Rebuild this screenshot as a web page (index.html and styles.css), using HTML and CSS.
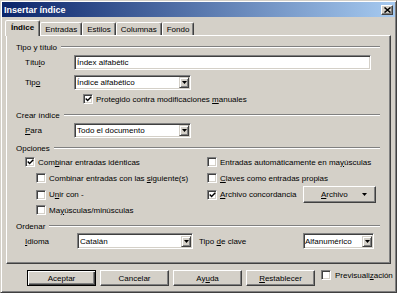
FILE: index.html
```html
<!DOCTYPE html>
<html lang="es">
<head>
    <meta charset="UTF-8">
    <title>Insertar índice</title>
    <link rel="stylesheet" href="styles.css">
</head>
<body>
    <div class="dialog">
        <div class="titlebar">
            <span class="title">Insertar índice</span>
            <span class="close">
                <svg width="7" height="6" viewBox="0 0 7 6"><path d="M0.5 0.5 L6.5 5.5 M6.5 0.5 L0.5 5.5" stroke="#000" stroke-width="1.5"/></svg>
            </span>
        </div>

        <div class="tabs">
            <div class="tab active">Índice</div>
            <div class="tab">Entradas</div>
            <div class="tab">Estilos</div>
            <div class="tab">Columnas</div>
            <div class="tab">Fondo</div>
        </div>

        <div class="panel">
            <div class="group-title first"><span>Tipo y título</span></div>
            <div class="field gap-3">
                <span class="label">Títu<u>l</u>o</span>
                <div class="input wide">Índex alfabètic</div>
            </div>
            <div class="field gap-5">
                <span class="label">Tip<u>o</u></span>
                <div class="select">
                    <span class="value">Índice alfabético</span>
                    <span class="arrow"><svg width="5" height="3" viewBox="0 0 5 3"><path d="M0 0 H5 L2.5 3 Z" fill="#000"/></svg></span>
                </div>
            </div>
            <div class="check-row protect">
                <span class="check on"><svg width="7" height="6" viewBox="0 0 7 6"><path d="M0.7 2.6 L2.6 4.6 L6.3 0.8" fill="none" stroke="#000" stroke-width="1.4"/></svg></span>
                <span>Protegido contra modificaciones <u>m</u>anuales</span>
            </div>

            <div class="group-title gap-6"><span>Crear índice</span></div>
            <div class="field gap-3">
                <span class="label"><u>P</u>ara</span>
                <div class="select">
                    <span class="value">Todo el documento</span>
                    <span class="arrow"><svg width="5" height="3" viewBox="0 0 5 3"><path d="M0 0 H5 L2.5 3 Z" fill="#000"/></svg></span>
                </div>
            </div>

            <div class="group-title gap-5"><span>Opciones</span></div>
            <div class="options">
                <div class="check-row">
                    <span class="check on"><svg width="7" height="6" viewBox="0 0 7 6"><path d="M0.7 2.6 L2.6 4.6 L6.3 0.8" fill="none" stroke="#000" stroke-width="1.4"/></svg></span>
                    <span>Com<u>b</u>inar entradas idénticas</span>
                </div>
                <div class="check-row">
                    <span class="check"></span>
                    <span>Entradas automáticamente en ma<u>y</u>úsculas</span>
                </div>
                <div class="check-row sub">
                    <span class="check"></span>
                    <span>Combinar entradas con las <u>s</u>iguiente(s)</span>
                </div>
                <div class="check-row">
                    <span class="check"></span>
                    <span><u>C</u>laves como entradas propias</span>
                </div>
                <div class="check-row sub">
                    <span class="check"></span>
                    <span>U<u>n</u>ir con -</span>
                </div>
                <div class="check-row">
                    <span class="check on"><svg width="7" height="6" viewBox="0 0 7 6"><path d="M0.7 2.6 L2.6 4.6 L6.3 0.8" fill="none" stroke="#000" stroke-width="1.4"/></svg></span>
                    <span><u>A</u>rchivo concordancia</span>
                    <span class="btn menu-btn">
                        <span><u>A</u>rchivo</span>
                        <svg width="5" height="3" viewBox="0 0 5 3"><path d="M0 0 H5 L2.5 3 Z" fill="#000"/></svg>
                    </span>
                </div>
                <div class="check-row sub">
                    <span class="check"></span>
                    <span>Ma<u>y</u>úsculas/minúsculas</span>
                </div>
                <div></div>
            </div>

            <div class="group-title gap-4"><span>Ordenar</span></div>
            <div class="field sort gap-2">
                <span class="label lang"><u>I</u>dioma</span>
                <div class="select lang-select">
                    <span class="value">Catalán</span>
                    <span class="arrow"><svg width="5" height="3" viewBox="0 0 5 3"><path d="M0 0 H5 L2.5 3 Z" fill="#000"/></svg></span>
                </div>
                <span class="label key">Tipo <u>d</u>e clave</span>
                <div class="select key-select">
                    <span class="value">Alfanumérico</span>
                    <span class="arrow"><svg width="5" height="3" viewBox="0 0 5 3"><path d="M0 0 H5 L2.5 3 Z" fill="#000"/></svg></span>
                </div>
            </div>
        </div>

        <div class="buttons">
            <span class="btn default">Aceptar</span>
            <span class="btn">Cancelar</span>
            <span class="btn">Ay<u>u</u>da</span>
            <span class="btn"><u>R</u>establecer</span>
            <div class="check-row preview">
                <span class="check"></span>
                <span>Previsuali<u>z</u>ación</span>
            </div>
        </div>
    </div>
</body>
</html>
```

FILE: styles.css
```css
* {
    margin: 0;
    padding: 0;
    box-sizing: border-box;
}

body {
    width: 397px;
    height: 293px;
    overflow: hidden;
    background: #d4d0c8;
    font-family: "Liberation Sans", Arial, sans-serif;
    font-size: 8px;
    color: #000;
}

u {
    text-decoration-thickness: 1px;
}

.dialog {
    width: 397px;
    height: 293px;
    padding: 1px;
    border: 1px solid;
    border-color: #d4d0c8 #404040 #404040 #d4d0c8;
    box-shadow: inset 1px 1px #fff, inset -1px -1px #808080;
}

/* Title bar */
.titlebar {
    height: 15px;
    display: flex;
    align-items: center;
    justify-content: space-between;
    padding: 0 2px 0 2px;
    background: linear-gradient(to right, #0a246a, #a6caf0);
}

.title {
    color: #fff;
    font-size: 9px;
    font-weight: bold;
}

.close {
    width: 12px;
    height: 10px;
    display: flex;
    align-items: center;
    justify-content: center;
    background: #d4d0c8;
    border: 1px solid;
    border-color: #fff #404040 #404040 #fff;
    box-shadow: inset -1px -1px #808080;
}

/* Tabs */
.tabs {
    height: 18px;
    display: flex;
    align-items: flex-end;
    padding-left: 3px;
}

.tab {
    height: 13px;
    padding: 0 4px;
    display: flex;
    align-items: center;
    background: #d4d0c8;
    border: 1px solid;
    border-bottom: none;
    border-color: #fff #404040 transparent #fff;
    border-radius: 2px 2px 0 0;
    box-shadow: inset -1px 0 #808080;
}

.tab.active {
    height: 16px;
    margin-bottom: -1px;
    padding: 0 5px 2px 5px;
    font-weight: bold;
    position: relative;
    z-index: 1;
}

/* Panel */
.panel {
    width: 385px;
    height: 229px;
    margin-left: 4px;
    display: flex;
    flex-direction: column;
    padding: 0 10px 0 9px;
    border: 1px solid;
    border-color: #fff #404040 #404040 #fff;
    box-shadow: inset -1px -1px #808080;
}

.group-title {
    height: 10px;
    display: flex;
    align-items: center;
    gap: 4px;
}

.group-title::after {
    content: "";
    flex: 1;
    border-top: 1px solid #808080;
    border-bottom: 1px solid #fff;
    margin-top: -1px;
}

.group-title.first { margin-top: 6px; }
.gap-2 { margin-top: 2px; }
.gap-3 { margin-top: 3px; }
.gap-4 { margin-top: 4px; }
.gap-5 { margin-top: 5px; }
.gap-6 { margin-top: 6px; }

.field {
    height: 15px;
    display: flex;
    align-items: center;
}

.label {
    width: 58px;
    padding-left: 9px;
    flex: none;
}

.input,
.select {
    height: 15px;
    display: flex;
    align-items: center;
    background: #fff;
    padding: 1px 1px 1px 2px;
    border: 1px solid;
    border-color: #808080 #fff #fff #808080;
    box-shadow: inset 1px 1px #404040, inset -1px -1px #d4d0c8;
}

.input.wide {
    width: 297px;
}

.select {
    width: 117px;
}

.select .value {
    flex: 1;
    white-space: nowrap;
    overflow: hidden;
}

.arrow {
    width: 10px;
    height: 11px;
    flex: none;
    display: flex;
    align-items: center;
    justify-content: center;
    background: #d4d0c8;
    border: 1px solid;
    border-color: #d4d0c8 #404040 #404040 #d4d0c8;
    box-shadow: inset 1px 1px #fff, inset -1px -1px #808080;
}

/* Checkboxes */
.check-row {
    display: flex;
    align-items: center;
    gap: 3px;
    white-space: nowrap;
}

.check {
    width: 10px;
    height: 10px;
    flex: none;
    display: flex;
    align-items: center;
    justify-content: center;
    background: #fff;
    border: 1px solid;
    border-color: #808080 #fff #fff #808080;
    box-shadow: inset 1px 1px #404040, inset -1px -1px #d4d0c8;
}

.protect {
    height: 10px;
    margin-top: 4px;
    padding-left: 67px;
}

.options {
    margin-top: 1px;
    padding-left: 9px;
    display: grid;
    grid-template-columns: 182px 1fr;
    grid-template-rows: 16px 16px 17px 14px;
}

.options .sub {
    padding-left: 11px;
}

/* Sort row */
.sort {
    height: 16px;
}

.label.lang {
    width: 61px;
}

.select.lang-select {
    width: 116px;
    height: 16px;
}

.label.key {
    width: 110px;
    padding-left: 6px;
}

.select.key-select {
    width: 71px;
    height: 16px;
    padding-left: 1px;
}

/* Bottom buttons */
.buttons {
    height: 16px;
    margin-top: 6px;
    padding-left: 25px;
    display: flex;
    align-items: center;
    gap: 4px;
}

.btn {
    width: 69px;
    height: 16px;
    display: flex;
    align-items: center;
    justify-content: center;
    background: #d4d0c8;
    border: 1px solid;
    border-color: #fff #404040 #404040 #fff;
    box-shadow: inset -1px -1px #808080;
}

.btn.default {
    border-color: #000;
    box-shadow: inset 1px 1px #fff, inset -1px -1px #404040, inset -2px -2px #808080;
}

.btn.menu-btn {
    width: 73px;
    height: 17px;
    margin-left: auto;
    margin-right: 4px;
    padding: 0 8px 0 17px;
    justify-content: space-between;
}

.preview {
    margin-left: 2px;
    align-self: flex-start;
    gap: 4px;
}
```
